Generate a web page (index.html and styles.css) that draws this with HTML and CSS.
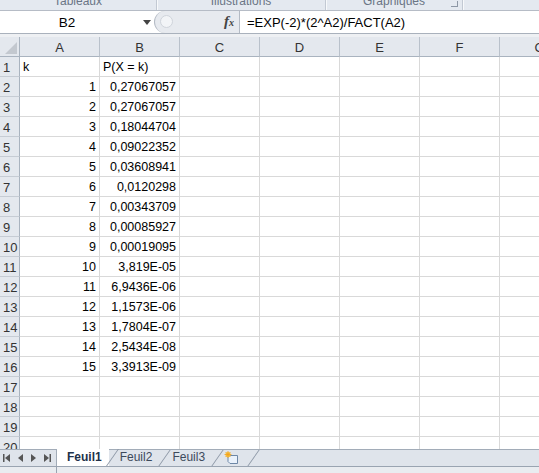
FILE: index.html
```html
<!DOCTYPE html>
<html lang="fr">
<head>
  <meta charset="UTF-8" />
  <title>Loi de Poisson</title>
  <link rel="stylesheet" href="styles.css">
</head>
<body>
  <div class="app">

    <div class="ribbon">
      <div class="group g1"><span>Tableaux</span></div>
      <div class="group g2"><span>Illustrations</span></div>
      <div class="group g3"><span>Graphiques</span><i class="launcher"></i></div>
      <div class="group g4"></div>
    </div>

    <div class="formula-bar">
      <div class="name-box">B2</div>
      <div class="name-arrow"><svg width="8" height="5" viewBox="0 0 8 5"><path d="M0 0H8L4 5Z" fill="#444"/></svg></div>
      <div class="fx-area">
        <span class="knob"></span>
        <span class="fx"><i>f</i><small>x</small></span>
      </div>
      <div class="formula">=EXP(-2)*(2^A2)/FACT(A2)</div>
    </div>

    <div class="spacer"></div>

    <div class="sheet" id="sheet">
      <div class="row head">
        <div class="rh corner"><svg width="12" height="12" viewBox="0 0 12 12"><path d="M12 0V12H0Z" fill="#c3c8cf"/></svg></div>
        <div class="ch">A</div><div class="ch">B</div><div class="ch">C</div>
        <div class="ch">D</div><div class="ch">E</div><div class="ch">F</div><div class="ch">G</div>
      </div>
    </div>

    <div class="tab-bar">
      <div class="nav">
        <svg width="54" height="16" viewBox="0 0 54 16">
          <rect x="3" y="4" width="1.5" height="8" fill="#555"/>
          <path d="M10 4V12L5 8Z" fill="#555"/>
          <path d="M23 4V12L18 8Z" fill="#555"/>
          <path d="M31 4V12L36 8Z" fill="#555"/>
          <path d="M44 4V12L49 8Z" fill="#555"/>
          <rect x="49.5" y="4" width="1.5" height="8" fill="#555"/>
        </svg>
      </div>
      <div class="tab active">Feuil1</div>
      <div class="tab">Feuil2</div>
      <div class="tab">Feuil3</div>
      <div class="tab new">
        <svg width="16" height="14" viewBox="0 0 16 14">
          <path d="M4 4.5H13.5V12.5H6L4 10.5Z" fill="#e9f1fb" stroke="#6d87a6"/>
          <circle cx="4" cy="3.5" r="2.6" fill="#f7c948"/>
          <path d="M4 0V7M0.5 3.5H7.5M1.5 1L6.5 6M6.5 1L1.5 6" stroke="#f0a020" stroke-width="0.8"/>
        </svg>
      </div>
      <div class="scroll"></div>
    </div>

    <div class="status">
      <div class="status-left"></div>
      <div class="status-right"></div>
    </div>
  </div>

  <script>
    // Valeurs de P(X = k) pour la loi de Poisson de paramètre 2
    const values = [
      "0,27067057", "0,27067057", "0,18044704", "0,09022352", "0,03608941",
      "0,0120298", "0,00343709", "0,00085927", "0,00019095", "3,819E-05",
      "6,9436E-06", "1,1573E-06", "1,7804E-07", "2,5434E-08", "3,3913E-09"
    ];

    const sheet = document.getElementById("sheet");

    for (let r = 1; r <= 20; r++) {
      const row = document.createElement("div");
      row.className = "row";

      let a = "", b = "", aClass = "cell", bClass = "cell";
      if (r === 1) {
        a = "k";
        b = "P(X = k)";
      } else if (r <= 16) {
        a = r - 1;
        b = values[r - 2];
        aClass += " num";
        bClass += " num";
      }

      row.innerHTML =
        '<div class="rh">' + r + '</div>' +
        '<div class="' + aClass + '">' + a + '</div>' +
        '<div class="' + bClass + '">' + b + '</div>' +
        '<div class="cell"></div><div class="cell"></div><div class="cell"></div>' +
        '<div class="cell"></div><div class="cell"></div>';
      sheet.appendChild(row);
    }
  </script>
</body>
</html>
```

FILE: styles.css
```css
* {
  box-sizing: border-box;
}

body {
  margin: 0;
  font-family: 'Liberation Sans', Arial, sans-serif;
  font-size: 12.5px;
  color: #000;
  background: #fff;
}

.app {
  width: 539px;
  height: 473px;
  overflow: hidden;
  display: flex;
  flex-direction: column;
}

/* Bandeau du ruban */
.ribbon {
  height: 11px;
  display: flex;
  background: #e4e9f0;
  border-bottom: 1px solid #b6bcc6;
  overflow: hidden;
}

.group {
  position: relative;
  height: 10px;
  border-right: 1px solid #c2c9d3;
  box-shadow: 1px 0 0 #f7f9fb;
  overflow: hidden;
  flex-shrink: 0;
}

.group span {
  display: block;
  text-align: center;
  color: #6a7585;
  font-size: 12px;
  line-height: 10px;
  margin-top: -4px;
}

.g1 { width: 157px; }
.g2 { width: 169px; }
.g3 { width: 137px; }
.g4 { flex: 1; border-right: none; }

.launcher {
  position: absolute;
  right: 4px;
  top: 1px;
  width: 7px;
  height: 6px;
  border-right: 1px solid #8d97a5;
  border-bottom: 1px solid #8d97a5;
}

/* Barre de formule */
.formula-bar {
  height: 23px;
  display: flex;
  background: #fff;
  border-bottom: 1px solid #a9b1bc;
}

.name-box {
  width: 134px;
  text-align: center;
  padding-top: 2px;
  line-height: 20px;
  font-size: 13.5px;
  margin-right: 6px;
}

.name-arrow {
  width: 14px;
  display: flex;
  align-items: center;
  justify-content: center;
}

.fx-area {
  width: 85px;
  position: relative;
  background: #e7eaef;
  border-radius: 11px 0 0 11px;
  border-left: 1px solid #b3bac4;
}

.knob {
  position: absolute;
  left: 5px;
  top: 4px;
  width: 13px;
  height: 13px;
  border-radius: 50%;
  background: #f2f4f7;
  border: 1px solid #cfd4db;
}

.fx {
  position: absolute;
  right: 5px;
  top: 2px;
  font-family: 'Liberation Serif', serif;
  font-weight: bold;
  color: #444;
  font-size: 15px;
}

.fx small {
  font-size: 10px;
  font-style: italic;
}

.formula {
  flex: 1;
  border-left: 1px solid #b3bac4;
  padding: 2px 0 0 7px;
  line-height: 20px;
  font-size: 13px;
}

.spacer {
  height: 3px;
  background: #eef0f3;
}

/* Feuille */
.sheet {
  height: 412px;
  overflow: hidden;
}

.row {
  display: flex;
  height: 20px;
}

.rh {
  width: 20px;
  flex-shrink: 0;
  background: #e4e8ee;
  border-right: 1px solid #a9b3bf;
  border-bottom: 1px solid #c6ccd4;
  color: #333;
  padding: 2px 0 0 3px;
  line-height: 17px;
  font-size: 13px;
}

.corner {
  display: flex;
  align-items: flex-end;
  justify-content: flex-end;
  padding: 0 2px 2px 0;
  border-bottom: 1px solid #a9b3bf;
}

.ch {
  width: 80px;
  flex-shrink: 0;
  background: #e4e8ee;
  border-right: 1px solid #b9c1cb;
  border-bottom: 1px solid #a9b3bf;
  text-align: center;
  padding-top: 2px;
  line-height: 17px;
  color: #333;
  font-size: 13px;
}

.cell {
  width: 80px;
  flex-shrink: 0;
  border-right: 1px solid #d9d9d9;
  border-bottom: 1px solid #d9d9d9;
  padding: 2px 3px 0;
  line-height: 17px;
  white-space: nowrap;
  overflow: hidden;
}

.num {
  text-align: right;
}

/* Onglets */
.tab-bar {
  height: 17px;
  display: flex;
  background: #dfe4eb;
  border-top: 1px solid #a2acb8;
}

.nav {
  width: 57px;
  flex-shrink: 0;
  border-right: 1px solid #a2acb8;
}

.tab {
  position: relative;
  padding: 0 9px 0 11px;
  line-height: 15px;
  color: #3d4a5c;
  font-size: 12px;
  flex-shrink: 0;
}

.tab::after {
  content: '';
  position: absolute;
  right: -4px;
  top: 0;
  bottom: 0;
  width: 1px;
  background: #8c97a6;
  transform: skewX(-35deg);
}

.tab.active {
  background: #fff;
  font-weight: bold;
  color: #22314a;
  margin-top: -1px;
  padding: 1px 7px 0 10px;
  z-index: 1;
}

.tab.new {
  padding: 1px 10px 0 10px;
}

.scroll {
  flex: 1;
  margin-left: 12px;
}

.status {
  height: 7px;
  display: flex;
  background: #e9ecf0;
  border-top: 1px solid #9aa4b1;
}

.status-left {
  width: 57px;
  border-right: 1px solid #9aa4b1;
}
```
